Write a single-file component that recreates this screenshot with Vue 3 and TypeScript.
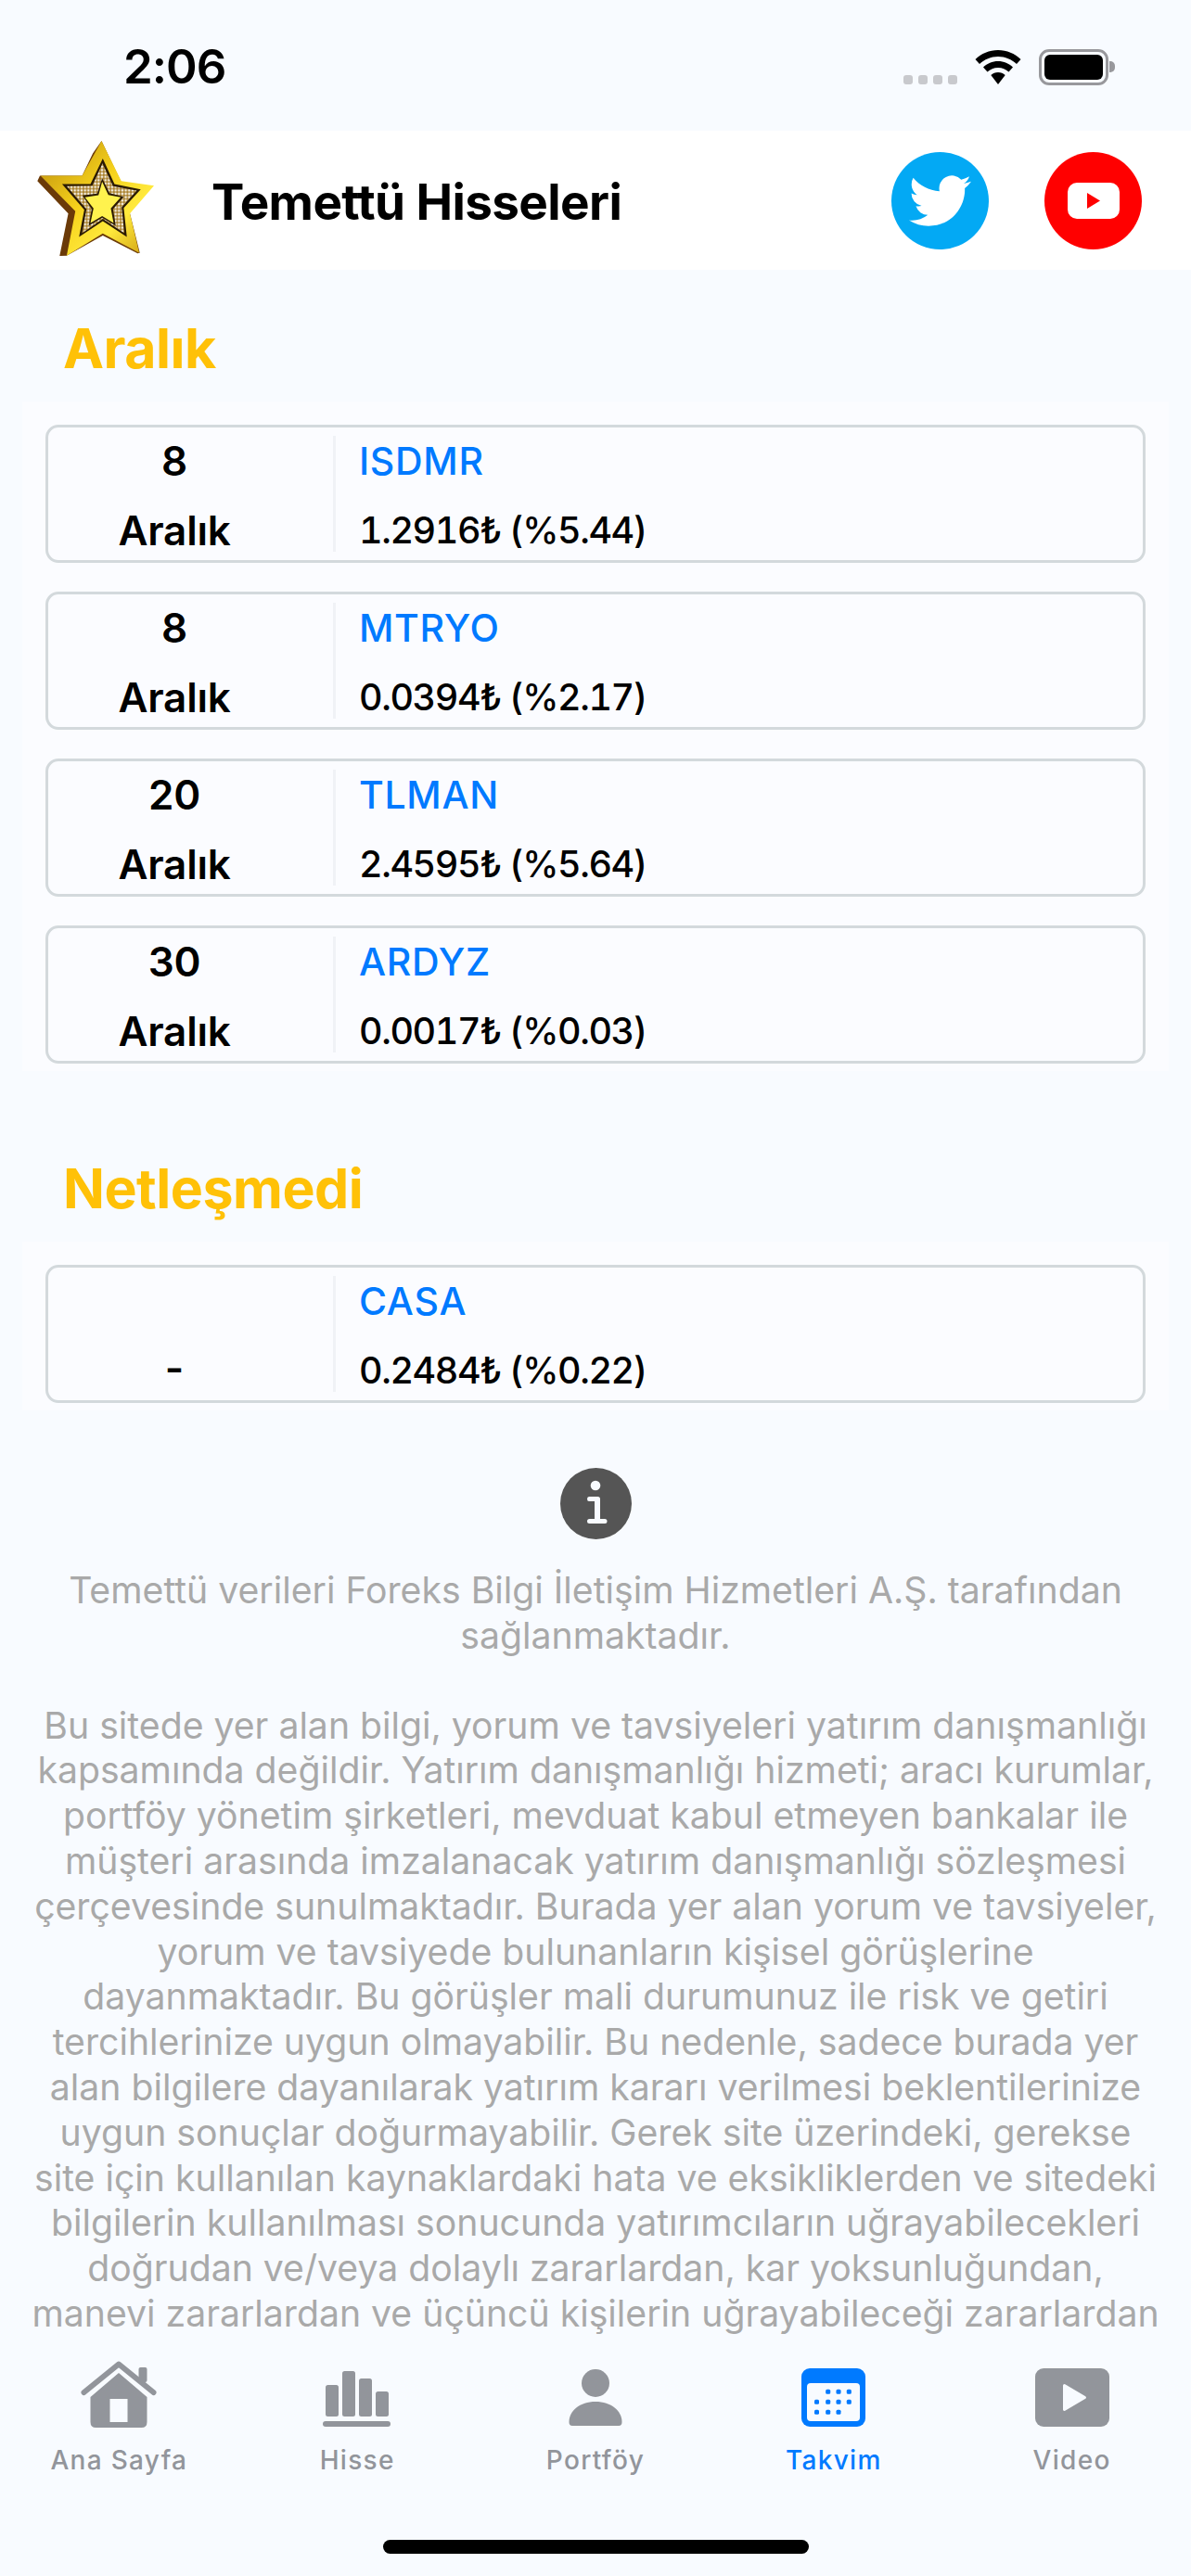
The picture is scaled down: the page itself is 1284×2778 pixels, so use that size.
<template>
  <div class="screen">
    <div class="status">
      <span class="status__time">2:06</span>
      <div class="status__icons">
        <div class="signal"><i></i><i></i><i></i><i></i></div>
        <svg class="wifi" viewBox="0 0 50 37" aria-hidden="true">
          <path d="M25 0C15.500 0 7 3.800 0.500 10L5 15C10.300 10 17.300 7 25 7S39.700 10 45 15L49.500 10C43 3.800 34.500 0 25 0Z" />
          <path d="M25 12C18.800 12 13.200 14.400 9 18.500L13.500 23.500C16.500 20.600 20.500 18.900 25 18.900S33.500 20.600 36.500 23.500L41 18.500C36.800 14.400 31.200 12 25 12Z" />
          <path d="M25 24C22 24 19.300 25.100 17.300 27L25 37L32.700 27C30.700 25.100 28 24 25 24Z" />
        </svg>
        <div class="battery"><div class="battery__level"></div></div>
      </div>
    </div>

    <header class="topbar">
      <svg class="logo" viewBox="50 53 400 400" aria-hidden="true">
        <defs>
          <linearGradient id="gold" x1="0" y1="0" x2="1" y2="1">
            <stop offset="0" stop-color="#b98a0c" />
            <stop offset="0.45" stop-color="#f6d21c" />
            <stop offset="0.7" stop-color="#ffe93c" />
            <stop offset="1" stop-color="#c9960c" />
          </linearGradient>
          <pattern id="jewels" width="11" height="11" patternUnits="userSpaceOnUse">
            <rect width="11" height="11" fill="#a9802a" />
            <circle cx="5.500" cy="5.500" r="4" fill="#f4efe4" />
          </pattern>
        </defs>
        <path fill="#6b3a08" d="M68 178L60 195L160 300L132 438L155 437L272 372L385 430L392 428L360 300L330 195L268 65L240 105L205 178Z" />
        <path fill="url(#gold)" d="M268 65L332 195L438 210L360 300L390 428L272 365L155 437L183 293L70 178L205 178Z" />
        <path fill="#2a1a04" d="M272 122L310 205L395 222L340 282L350 376L272 325L195 376L212 288L140 205L232 205Z" />
        <path fill="url(#jewels)" d="M271 138L305 212L382 226L333 280L342 364L272 318L205 364L219 286L155 212L238 210Z" />
        <path fill="#2a1a04" d="M270 186L294 234L340 246L305 286L314 340L270 314L226 340L236 286L206 242L254 236Z" />
        <path fill="#fff24e" d="M270 197L290 240L330 248L298 284L307 331L270 309L232 331L242 284L214 248L258 241Z" />
      </svg>
      <h1 class="topbar__title">Temettü Hisseleri</h1>
      <div class="topbar__social">
        <span class="social social--twitter">
          <svg viewBox="0 0 24 24" aria-hidden="true">
            <path d="M23.953 4.570a10 10 0 01-2.825.775 4.958 4.958 0 002.163-2.723c-.951.555-2.005.959-3.127 1.184a4.920 4.920 0 00-8.384 4.482C7.690 8.095 4.067 6.130 1.640 3.162a4.822 4.822 0 00-.666 2.475c0 1.710.870 3.213 2.188 4.096a4.904 4.904 0 01-2.228-.616v.060a4.923 4.923 0 003.946 4.827 4.996 4.996 0 01-2.212.085 4.936 4.936 0 004.604 3.417 9.867 9.867 0 01-6.102 2.105c-.390 0-.779-.023-1.170-.067a13.995 13.995 0 007.557 2.209c9.053 0 13.998-7.496 13.998-13.985 0-.210 0-.420-.015-.630A9.935 9.935 0 0024 4.590z" />
          </svg>
        </span>
        <span class="social social--youtube">
          <svg viewBox="0 0 56 39" aria-hidden="true">
            <rect width="56" height="39" rx="10" fill="#fff" />
            <path d="M21 11L35 19.500L21 28Z" fill="#f00" />
          </svg>
        </span>
      </div>
    </header>

    <main class="content">
      <section v-for="group in groups" :key="group.title" class="group">
        <h2 class="group__title">{{ group.title }}</h2>
        <div class="group__list">
          <div v-for="item in group.items" :key="item.code" class="row">
            <div class="row__date">
              <span>{{ item.day }}</span>
              <span>{{ item.month }}</span>
            </div>
            <div class="row__info">
              <span class="row__code">{{ item.code }}</span>
              <span class="row__value">{{ item.value }}</span>
            </div>
          </div>
        </div>
      </section>

      <div class="note">
        <svg class="note__icon" viewBox="0 0 77 77" aria-hidden="true">
          <circle cx="38.500" cy="38.500" r="38.500" fill="#555" />
          <circle cx="38" cy="19" r="5.300" fill="#f8fbff" />
          <path fill="#f8fbff" d="M31 31H40.500Q43 31 43 33.500V55H48Q50.500 55 50.500 57.500T48 60H31.500Q29 60 29 57.500T31.500 55H37V36H31Q29 36 29 33.500T31 31Z" />
        </svg>
        <p class="note__text">
          <span v-for="line in sourceLines" :key="line">{{ line }}</span>
        </p>
        <p class="note__text">
          <span v-for="line in legalLines" :key="line">{{ line }}</span>
        </p>
      </div>
    </main>

    <nav class="tabs">
      <div v-for="tab in tabs" :key="tab.label" class="tab" :class="{ 'tab--active': tab.active }">
        <svg class="tab__icon" viewBox="0 0 90 72" aria-hidden="true">
          <template v-if="tab.icon === 'home'">
            <path d="M7.500 34L45 3.500L82.500 34" fill="none" stroke="currentColor" stroke-width="6" stroke-linecap="round" stroke-linejoin="round" />
            <rect x="66.500" y="7" width="9" height="16" rx="2" fill="currentColor" />
            <path fill="currentColor" fill-rule="evenodd" d="M45 13L75.500 39V66Q75.500 72 69.500 72H20.500Q14.500 72 14.500 66V39ZM35.500 41V66H54.500V41Z" />
          </template>
          <template v-else-if="tab.icon === 'chart'">
            <rect x="11" y="26" width="14" height="34" rx="2.500" fill="currentColor" />
            <rect x="29" y="11" width="14" height="49" rx="2.500" fill="currentColor" />
            <rect x="47" y="19" width="14" height="41" rx="2.500" fill="currentColor" />
            <rect x="65" y="33" width="14" height="27" rx="2.500" fill="currentColor" />
            <rect x="8" y="65" width="73" height="6" rx="3" fill="currentColor" />
          </template>
          <template v-else-if="tab.icon === 'person'">
            <circle cx="45" cy="24" r="15" fill="currentColor" />
            <path fill="currentColor" d="M16.500 66C16.500 54 28 44 45 44S73.500 54 73.500 66Q73.500 70 70 70H20Q16.500 70 16.500 66Z" />
          </template>
          <template v-else-if="tab.icon === 'calendar'">
            <rect x="10" y="8" width="69" height="63" rx="9" fill="currentColor" />
            <rect x="16" y="24" width="57" height="41" rx="4" fill="#f8fbff" />
            <rect v-for="dot in calendarDots" :key="dot.join()" :x="dot[0] - 2.500" :y="dot[1] - 2.500" width="5" height="5" rx="1.500" fill="currentColor" />
          </template>
          <template v-else>
            <rect x="5" y="8" width="80" height="63" rx="9" fill="currentColor" />
            <path d="M36.500 26.500L58.500 39.500L36.500 52.500Z" fill="#f8fbff" stroke="#f8fbff" stroke-width="3" stroke-linejoin="round" />
          </template>
        </svg>
        <span class="tab__label">{{ tab.label }}</span>
      </div>
    </nav>
    <div class="home-bar"><div class="home-bar__pill"></div></div>
  </div>
</template>

<script setup lang="ts">
interface Dividend {
  day: string
  month: string
  code: string
  value: string
}

const groups: { title: string; items: Dividend[] }[] = [
  {
    title: 'Aralık',
    items: [
      { day: '8', month: 'Aralık', code: 'ISDMR', value: '1.2916₺ (%5.44)' },
      { day: '8', month: 'Aralık', code: 'MTRYO', value: '0.0394₺ (%2.17)' },
      { day: '20', month: 'Aralık', code: 'TLMAN', value: '2.4595₺ (%5.64)' },
      { day: '30', month: 'Aralık', code: 'ARDYZ', value: '0.0017₺ (%0.03)' },
    ],
  },
  {
    title: 'Netleşmedi',
    items: [{ day: '', month: '-', code: 'CASA', value: '0.2484₺ (%0.22)' }],
  },
]

const sourceLines = [
  'Temettü verileri Foreks Bilgi İletişim Hizmetleri A.Ş. tarafından',
  'sağlanmaktadır.',
]

const legalLines = [
  'Bu sitede yer alan bilgi, yorum ve tavsiyeleri yatırım danışmanlığı',
  'kapsamında değildir. Yatırım danışmanlığı hizmeti; aracı kurumlar,',
  'portföy yönetim şirketleri, mevduat kabul etmeyen bankalar ile',
  'müşteri arasında imzalanacak yatırım danışmanlığı sözleşmesi',
  'çerçevesinde sunulmaktadır. Burada yer alan yorum ve tavsiyeler,',
  'yorum ve tavsiyede bulunanların kişisel görüşlerine',
  'dayanmaktadır. Bu görüşler mali durumunuz ile risk ve getiri',
  'tercihlerinize uygun olmayabilir. Bu nedenle, sadece burada yer',
  'alan bilgilere dayanılarak yatırım kararı verilmesi beklentilerinize',
  'uygun sonuçlar doğurmayabilir. Gerek site üzerindeki, gerekse',
  'site için kullanılan kaynaklardaki hata ve eksikliklerden ve sitedeki',
  'bilgilerin kullanılması sonucunda yatırımcıların uğrayabilecekleri',
  'doğrudan ve/veya dolaylı zararlardan, kar yoksunluğundan,',
  'manevi zararlardan ve üçüncü kişilerin uğrayabileceği zararlardan',
]

const tabs = [
  { label: 'Ana Sayfa', icon: 'home', active: false },
  { label: 'Hisse', icon: 'chart', active: false },
  { label: 'Portföy', icon: 'person', active: false },
  { label: 'Takvim', icon: 'calendar', active: true },
  { label: 'Video', icon: 'play', active: false },
]

const calendarCols = [26.5, 38.7, 50, 61.3]
const calendarDots: number[][] = [
  ...calendarCols.slice(1).map((x) => [x, 33.3]),
  ...calendarCols.map((x) => [x, 44.3]),
  ...calendarCols.slice(0, 3).map((x) => [x, 55.3]),
]
</script>

<style>
html,
body {
  margin: 0;
  background: #f8fbff;
}
</style>

<style scoped>
.screen {
  width: 1284px;
  height: 2778px;
  display: flex;
  flex-direction: column;
  overflow: hidden;
  background: #f8fbff;
  font-family: Inter, 'Liberation Sans', sans-serif;
  color: #000;
}

.status {
  height: 141px;
  flex: none;
  display: flex;
  justify-content: space-between;
  align-items: flex-start;
  padding: 0 89px 0 133px;
  box-sizing: border-box;
}

.status__time {
  margin-top: 42px;
  font-size: 51px;
  line-height: 60px;
  font-weight: 600;
  letter-spacing: -1px;
}

.status__icons {
  display: flex;
  align-items: flex-start;
  margin-top: 53px;
}

.signal {
  display: flex;
  gap: 6px;
  margin-top: 28px;
  margin-right: 19px;
}

.signal i {
  width: 10px;
  height: 10px;
  border-radius: 3px;
  background: #c8c9cd;
}

.wifi {
  width: 50px;
  height: 37px;
  margin-top: 1px;
  margin-right: 19px;
}

.battery {
  position: relative;
  width: 75px;
  height: 39px;
  box-sizing: border-box;
  border: 3px solid #98989c;
  border-radius: 11px;
  padding: 3px;
}

.battery::after {
  content: '';
  position: absolute;
  top: 10px;
  right: -10px;
  width: 6px;
  height: 12px;
  border-radius: 0 5px 5px 0;
  background: #98989c;
}

.battery__level {
  height: 100%;
  border-radius: 6px;
  background: #000;
}

.topbar {
  height: 150px;
  flex: none;
  display: flex;
  align-items: center;
  background: #fff;
}

.logo {
  width: 133px;
  height: 133px;
  margin-left: 37px;
  margin-top: -4px;
  flex: none;
}

.topbar__title {
  margin: 3px 0 0 58px;
  font-size: 53px;
  font-weight: 700;
  letter-spacing: -0.6px;
  white-space: nowrap;
}

.topbar__social {
  margin-left: auto;
  margin-right: 53px;
  display: flex;
  gap: 60px;
}

.social {
  width: 105px;
  height: 105px;
  border-radius: 50%;
  display: flex;
  align-items: center;
  justify-content: center;
}

.social--twitter {
  background: #03a9f4;
}

.social--twitter svg {
  width: 67px;
  height: 67px;
  fill: #fff;
}

.social--youtube {
  background: #f00;
}

.social--youtube svg {
  width: 56px;
  height: 39px;
}

.content {
  flex: 1;
  min-height: 0;
  overflow: hidden;
}

.group__title {
  margin: 0;
  padding: 49px 0 0 68px;
  height: 93px;
  font-size: 59px;
  line-height: 72px;
  font-weight: 700;
  color: #ffc107;
  letter-spacing: -0.5px;
  box-sizing: content-box;
}

.group__list {
  margin: 0 24px;
  padding: 25px 25px 8px;
  background: #fbfcff;
  display: flex;
  flex-direction: column;
  gap: 31px;
}

.group + .group {
  margin-top: 42px;
}

.row {
  height: 149px;
  box-sizing: border-box;
  border: 3px solid #d3d9dc;
  border-radius: 14px;
  display: flex;
  padding: 9px 0;
}

.row__date {
  width: 272px;
  margin-right: 35px;
  padding-top: 1px;
  display: flex;
  flex-direction: column;
  gap: 23px;
  align-items: center;
  font-size: 44px;
  line-height: 52px;
  font-weight: 600;
  letter-spacing: -0.2px;
  flex: none;
}

.row__date span,
.row__info span {
  height: 52px;
}

.row__info {
  border-left: 3px solid #f0f2f6;
  padding-left: 25px;
  padding-top: 1px;
  display: flex;
  flex-direction: column;
  gap: 23px;
  font-size: 39.5px;
  line-height: 52px;
  font-weight: 500;
}

.row__value {
  font-variant-numeric: tabular-nums;
  letter-spacing: -1.4px;
}

.row__code {
  color: #007aff;
  font-size: 41px;
  letter-spacing: 0.7px;
}

.note {
  margin-top: 62px;
  text-align: center;
}

.note__icon {
  display: block;
  width: 77px;
  height: 77px;
  margin: 0 auto 31px;
}

.note__text {
  margin: 0 0 48px;
  font-size: 39.2px;
  line-height: 48.8px;
  color: #a9a9a9;
  white-space: nowrap;
}

.note__text span {
  display: block;
}

.tabs {
  height: 184px;
  flex: none;
  display: flex;
  background: #f8fbff;
  padding-top: 16px;
  box-sizing: border-box;
}

.tab {
  flex: 1;
  display: flex;
  flex-direction: column;
  align-items: center;
  color: #92959b;
}

.tab--active {
  color: #007aff;
}

.tab__icon {
  width: 90px;
  height: 72px;
}

.tab__label {
  margin-top: 17px;
  font-size: 28px;
  line-height: 36px;
  font-weight: 500;
  letter-spacing: 1.3px;
}

.home-bar {
  height: 64px;
  flex: none;
  display: flex;
  justify-content: center;
  background: #f8fbff;
  padding-top: 25px;
  box-sizing: border-box;
}

.home-bar__pill {
  width: 459px;
  height: 15px;
  border-radius: 8px;
  background: #000;
}
</style>
